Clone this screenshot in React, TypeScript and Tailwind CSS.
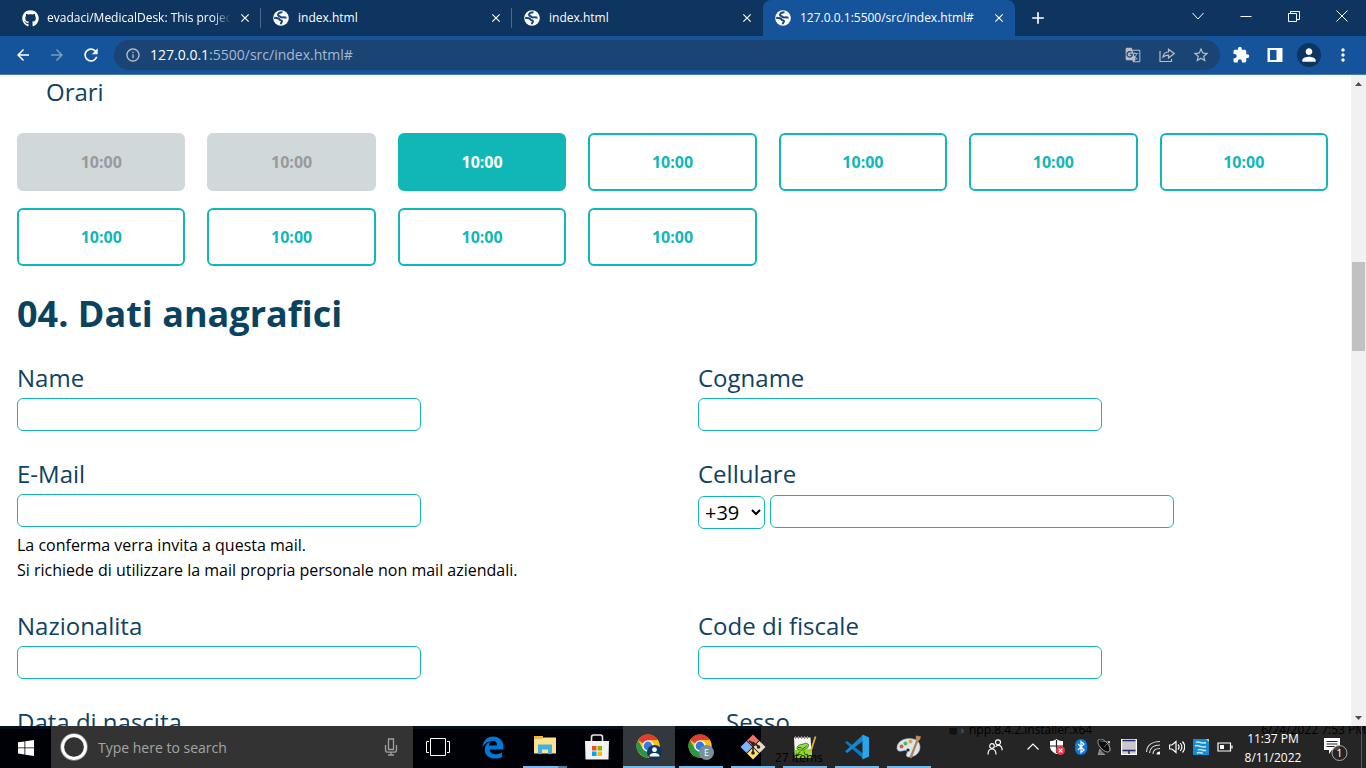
import type { ReactNode } from "react";
import { FaGithub } from "react-icons/fa";
import {
  MdArrowBack,
  MdArrowForward,
  MdRefresh,
  MdInfoOutline,
  MdStarOutline,
  MdExtension,
  MdMoreVert,
  MdPerson,
  MdClose,
  MdAdd,
  MdGTranslate,
} from "react-icons/md";

const slots = ["off", "off", "on", "free", "free", "free", "free", "free", "free", "free", "free"];

const slotStyles: Record<string, string> = {
  off: "border-[#d0d8da] bg-[#d0d8da] text-[#989a9d]",
  on: "border-[#11b7b7] bg-[#11b7b7] text-white",
  free: "border-[#11b7b7] bg-white text-[#11b7b7]",
};

function Globe() {
  return (
    <svg viewBox="0 0 16 16" className="size-4 shrink-0">
      <circle cx="8" cy="8" r="7.8" fill="#fff" />
      <path
        d="M9.500 2.300C7 2.200 5 3.200 5 4.800c0 1.500 1.800 1.300 2.700 2.200.800.800 2.200.300 3 .300 1.200 0 1.700.600 2.800.200"
        fill="none"
        stroke="#1a4777"
        strokeWidth="2"
      />
      <path
        d="M1.200 7.800c2 .400 3.300-.200 4.600.800.900.700.700 1.500 1.900 1.700 1.300.200 1.600.800 1 1.700-.600.800-.900 1-.900 2.300"
        fill="none"
        stroke="#1a4777"
        strokeWidth="2"
      />
    </svg>
  );
}

function Tab({ title, github, active, divider }: { title: string; github?: boolean; active?: boolean; divider?: boolean }) {
  return (
    <div
      className={
        active
          ? "relative flex h-9 w-[252px] items-center rounded-t-lg bg-[#15539b] pr-2 pl-3"
          : "relative flex h-9 w-[251px] items-center pr-2 pl-3"
      }
    >
      {github ? <FaGithub className="size-[17px] shrink-0 text-white" /> : <Globe />}
      <a
        href="#"
        className={
          github
            ? "ml-2 flex-1 overflow-hidden text-[12px] whitespace-nowrap text-white [mask-image:linear-gradient(to_right,black_90%,transparent)]"
            : "ml-[9px] flex-1 overflow-hidden text-[12px] whitespace-nowrap text-white"
        }
      >
        {title}
      </a>
      <button aria-label={"Close " + title} className="ml-1.5 flex size-4 items-center justify-center text-white">
        <MdClose className="size-[14px]" />
      </button>
      {divider && <span className="absolute top-2 right-0 h-5 w-px bg-[#4b6a8d]" />}
    </div>
  );
}

function ToolButton({ label, children }: { label: string; children: ReactNode }) {
  return (
    <button aria-label={label} className="flex h-[30px] w-[34px] shrink-0 items-center justify-center text-white">
      {children}
    </button>
  );
}

function WindowButton({ label, d }: { label: string; d: string }) {
  return (
    <button aria-label={label} className="flex h-[31px] w-12 items-center justify-center">
      <svg viewBox="0 0 12 12" className="size-3" fill="none" stroke="#fff">
        <path d={d} />
      </svg>
    </button>
  );
}

function Browser() {
  return (
    <header className="shrink-0 border-b border-[#4679b4] bg-[#15539b]">
      <div className="flex h-9 bg-[#0d355f] pl-2.5">
        <Tab title="evadaci/MedicalDesk: This project is" github divider />
        <Tab title="index.html" divider />
        <Tab title="index.html" />
        <Tab title="127.0.0.1:5500/src/index.html#" active />
        <button aria-label="New tab" className="ml-[11px] flex w-6 items-center justify-center text-white">
          <MdAdd className="size-5" />
        </button>
        <div className="ml-auto flex">
          <WindowButton label="Search tabs" d="M.5 3l5.500 6 5.500-6" />
          <WindowButton label="Minimize" d="M.5 6.500h11" />
          <WindowButton label="Restore" d="M.5 3.500h8v8h-8zM2.500 3.500v-2h9v8h-3" />
          <WindowButton label="Close" d="M.5.500l11 11M11.500.500l-11 11" />
        </div>
      </div>
      <div className="flex h-[38px] items-center px-1.5">
        <ToolButton label="Back"><MdArrowBack className="size-[18px]" /></ToolButton>
        <ToolButton label="Forward"><MdArrowForward className="size-[18px] text-[#7a9cc5]" /></ToolButton>
        <ToolButton label="Reload"><MdRefresh className="size-5" /></ToolButton>
        <div className="mr-1 ml-1.5 flex h-[30px] flex-1 items-center rounded-full bg-[#194474] pr-0.5 pl-[11px] text-[#b9bec5]">
          <MdInfoOutline className="size-4" />
          <label className="ml-[9px] flex-1 text-[14px] leading-5 text-[#a9b9cc]">
            <span className="text-white">127.0.0.1</span>:5500/src/index.html#
          </label>
          <ToolButton label="Translate"><MdGTranslate className="size-4 text-[#b9bec5]" /></ToolButton>
          <ToolButton label="Share">
            <svg viewBox="0 0 16 16" className="size-4" fill="none" stroke="#b9bec5" strokeWidth="1.200">
              <path d="M1 4v10.500h11.500V12M4 10c.500-3.500 2.500-5 5.500-5V2.200L15.200 6.500 9.500 11V8.200c-2.500 0-4 .600-5.500 1.800z" />
            </svg>
          </ToolButton>
          <ToolButton label="Bookmark"><MdStarOutline className="size-[18px] text-[#b9bec5]" /></ToolButton>
        </div>
        <ToolButton label="Extensions"><MdExtension className="size-[18px]" /></ToolButton>
        <ToolButton label="Side panel">
          <svg viewBox="0 0 16 16" className="size-4">
            <path fill="#fff" fillRule="evenodd" d="M.5 1h15v14H.5zM3 3v10h6.500V3z" />
          </svg>
        </ToolButton>
        <ToolButton label="Profile">
          <span className="flex size-6 items-center justify-center rounded-full bg-[#0d355f]">
            <MdPerson className="size-5" />
          </span>
        </ToolButton>
        <ToolButton label="Menu"><MdMoreVert className="size-5" /></ToolButton>
      </div>
    </header>
  );
}

const labelStyle = "mb-1 block text-[24px] leading-[33px] text-[#0f4260]";
const inputStyle = "h-[33px] w-[404px] rounded-md border border-[#11b7b7] bg-white px-2 text-[20px]";

function Field({ id, label, type = "text", children }: { id: string; label: string; type?: string; children?: ReactNode }) {
  return (
    <div>
      <label htmlFor={id} className={labelStyle}>{label}</label>
      <input id={id} type={type} className={inputStyle} />
      {children}
    </div>
  );
}

function BookingForm() {
  return (
    <main className="min-w-0 flex-1 overflow-hidden pr-[23px] pl-[17px]">
      <h2 className="pl-[29px] text-[24px] leading-[34px] text-[#0f4260]">Orari</h2>
      <div className="mt-6 grid grid-cols-7 gap-x-[22px] gap-y-[17px]">
        {slots.map((kind, i) => (
          <button
            key={i}
            disabled={kind === "off"}
            className={"h-[58px] rounded-md border-2 text-[16px] font-bold " + slotStyles[kind]}
          >
            10:00
          </button>
        ))}
      </div>
      <h1 className="mt-5 text-[36px] leading-[56px] font-bold text-[#0b435f]">04. Dati anagrafici</h1>
      <form className="mt-[19px] grid grid-cols-2 gap-x-[51px] gap-y-[26px]">
        <Field id="name" label="Name" />
        <Field id="surname" label="Cogname" />
        <Field id="email" label="E-Mail" type="email">
          <p className="mt-1.5 text-[16px] leading-[25px] text-black">
            La conferma verra invita a questa mail.
            <br />
            Si richiede di utilizzare la mail propria personale non mail aziendali.
          </p>
        </Field>
        <div>
          <label htmlFor="phone" className={labelStyle}>Cellulare</label>
          <div className="flex items-center gap-[5px]">
            <select aria-label="Prefisso" className="mt-0.5 h-[33px] w-[67px] rounded-md border border-[#11b7b7] bg-white pl-0.5 text-[20px] text-black">
              <option>+39</option>
            </select>
            <input id="phone" type="tel" className={inputStyle} />
          </div>
        </div>
        <Field id="nation" label="Nazionalita" />
        <Field id="fiscal" label="Code di fiscale" />
        <Field id="birth" label="Data di nascita" />
        <div className="pl-7">
          <Field id="sex" label="Sesso" />
        </div>
      </form>
    </main>
  );
}

function ScrollBar() {
  return (
    <div className="flex w-[15px] shrink-0 flex-col items-center bg-[#f1f1f1]">
      <svg viewBox="0 0 15 17" className="h-[17px] w-[15px]"><path d="M4 11l3.500-4 3.500 4z" fill="#505050" /></svg>
      <div className="mt-[170px] h-[89px] w-[13px] bg-[#c1c1c1]" />
      <svg viewBox="0 0 15 17" className="mt-auto h-[17px] w-[15px]"><path d="M4 7l3.500 4L11 7z" fill="#505050" /></svg>
    </div>
  );
}

function ChromeLogo({ children }: { children: ReactNode }) {
  return (
    <svg viewBox="0 0 26 26" className="size-[26px]">
      <circle cx="12" cy="12" r="11.500" fill="#fbc116" />
      <path d="M12 12L2 6.300A11.500 11.500 0 0 1 22 6.300H12z" fill="#e33b2e" />
      <path d="M2 6.300A11.500 11.500 0 0 0 12 23.500l5-8.600L12 12 7 14.900z" fill="#279847" />
      <path d="M12 6.300h10A11.500 11.500 0 0 1 12 23.500l5-8.600z" fill="#fbc116" />
      <circle cx="12" cy="12" r="5.700" fill="#fff" />
      <circle cx="12" cy="12" r="4.400" fill="#3478e5" />
      {children}
    </svg>
  );
}

function TaskButton({ label, state, children }: { label: string; state?: "open" | "active" | "stacked"; children: ReactNode }) {
  return (
    <button
      aria-label={label}
      className={
        state === "active"
          ? "relative flex w-[52px] shrink-0 items-center justify-center bg-[#33383d]"
          : "relative flex w-[52px] shrink-0 items-center justify-center"
      }
    >
      {children}
      {state === "open" && <span className="absolute inset-x-1 bottom-0 h-0.5 bg-[#76b9ed]" />}
      {state === "active" && <span className="absolute inset-x-0 bottom-0 h-0.5 bg-[#76b9ed]" />}
      {state === "stacked" && <span className="absolute inset-x-1 bottom-0 h-0.5 border-r-[9px] border-[#527fa5] bg-[#76b9ed]" />}
    </button>
  );
}

function TrayIcon({ label, children }: { label: string; children: ReactNode }) {
  return (
    <button aria-label={label} className="flex w-6 shrink-0 items-center justify-center">
      <svg viewBox="0 0 16 16" className="size-4" fill="none" stroke="#fff" strokeWidth="1.200">
        {children}
      </svg>
    </button>
  );
}

function Taskbar() {
  return (
    <footer className="relative flex h-[42px] shrink-0 bg-[#252525] text-white">
      <div className="flex bg-[#000106]">
        <button aria-label="Start" className="flex w-[51px] items-center justify-center border-t-[3px] border-[#02101c] pb-0.5">
          <svg viewBox="0 0 16 16" className="size-4" fill="#fff">
            <path d="M0 2.300L6.500 1.400v6.100H0zM7.300 1.300L16 0v7.500H7.300zM0 8.300h6.500v6.200L0 13.600zM7.300 8.300H16V16l-8.700-1.300z" />
          </svg>
        </button>
        <div className="flex w-[362px] items-center bg-[#333333] pr-[15px] pl-[9px]">
          <svg viewBox="0 0 28 28" className="size-7"><circle cx="14" cy="14" r="11.700" fill="none" stroke="#999" strokeWidth="4" /><circle cx="14" cy="14" r="11.500" fill="none" stroke="#fff" strokeWidth="2.800" /></svg>
          <input
            aria-label="Type here to search"
            placeholder="Type here to search"
            className="ml-2.5 min-w-0 flex-1 text-[14px] placeholder:text-[#a5a5a5]"
          />
          <svg viewBox="0 0 14 18" className="h-[18px] w-3.5" fill="none" stroke="#a0a0a0" strokeWidth="1.300">
            <path d="M4.500 1h5v10.500h-5zM1.500 7v5c0 1.500 1 2.200 2.500 2.200h6c1.500 0 2.500-.700 2.500-2.200V7M7 14.500V17M4 17h6" />
          </svg>
        </div>
      </div>
      <div className="flex w-[348px] bg-linear-to-b from-[#02101c] from-[3px] to-[#000106] to-[3px] pl-0.5">
        <TaskButton label="Task View">
          <svg viewBox="0 0 24 20" className="mr-1.5 h-5 w-6" fill="none" stroke="#fff">
            <path d="M4.500 1.500h15v17h-15zM3 4.500H.500v11H3M21 4.500h2.500v11H21" />
          </svg>
        </TaskButton>
        <TaskButton label="Edge">
          <svg viewBox="0 0 22 23" className="h-[23px] w-[22px]">
            <path fill="#0078d7" d="M.5 10.500C1 5 5 .500 11 .500c6.500 0 10.500 4.500 10.500 10.500v2.500H7.500c.200 3 2.500 4.700 6 4.700 2.500 0 4.700-.600 6.600-1.800v4.700c-2 1-4.400 1.500-7.100 1.500-6 0-10.200-3.400-10.200-8.900 0-4 2-6.700 5.700-8.200-1 1.300-1.300 2.600-1.400 4h8c0-3.200-1.500-4.800-4.500-4.800-4 0-7.500 2.200-10.100 6.300z" />
          </svg>
        </TaskButton>
        <TaskButton label="File Explorer" state="stacked">
          <svg viewBox="0 0 24 20" className="-mt-1 h-5 w-6">
            <path fill="#e8b64a" d="M1 2.500V1h9v2h13v4H1z" />
            <path fill="#ffe28d" d="M1 4h8l1.500-1.500H23v16H1z" />
            <path fill="#3fb1e5" d="M5 9.500h14V19h-4v-4.500H9V19H5z" />
          </svg>
        </TaskButton>
        <TaskButton label="Store">
          <svg viewBox="0 0 24 26" className="h-[26px] w-6">
            <path d="M6.500 9V3.500c0-1.500.800-2.500 2-2.500h7c1.200 0 2 1 2 2.500V9" fill="none" stroke="#e8e8e8" strokeWidth="1.600" />
            <path fill="#f3f3f3" d="M0 7h24l-.500 18.500H.500z" />
            <path fill="#f25022" d="M7 12h4.500v4.500H7z" /><path fill="#7fba00" d="M12.500 12H17v4.500h-4.500z" />
            <path fill="#00a4ef" d="M7 17.500h4.500V22H7z" /><path fill="#ffb900" d="M12.500 17.500H17V22h-4.500z" />
          </svg>
        </TaskButton>
        <TaskButton label="Chrome" state="active">
          <ChromeLogo>
            <circle cx="18.500" cy="18.500" r="7.500" fill="#0d355f" />
            <circle cx="18.500" cy="15.700" r="2.400" fill="#fff" />
            <path d="M13.500 22.500c0-2.500 2.500-3.400 5-3.400s5 .900 5 3.400z" fill="#fff" />
          </ChromeLogo>
        </TaskButton>
        <TaskButton label="Chrome, profile E" state="open">
          <ChromeLogo>
            <circle cx="18.500" cy="18.500" r="7.500" fill="#78909c" />
            <text x="18.500" y="21.700" textAnchor="middle" fontSize="9" fill="#fff">E</text>
          </ChromeLogo>
        </TaskButton>
      </div>
      <div className="-ml-[34px] flex">
        <TaskButton label="Git" state="open">
          <svg viewBox="0 0 26 26" className="size-[26px]">
            <path fill="#f0706c" d="M13 .500L19 6.500 13 12.500 7 6.500z" /><path fill="#80b3ff" d="M6.500 7l6 6-6 6-6-6z" />
            <path fill="#ffe06a" d="M13 13.500l6 6-6 6-6-6z" /><path fill="#e7dec3" d="M19.500 7l6 6-6 6-6-6z" />
            <path d="M9 7l9.500 5M13 10v9" stroke="#33241f" strokeWidth="1.600" />
            <circle cx="13" cy="9.500" r="1.800" fill="#33241f" /><circle cx="18.500" cy="13" r="1.800" fill="#33241f" /><circle cx="13" cy="19" r="1.800" fill="#33241f" />
          </svg>
        </TaskButton>
        <TaskButton label="Notepad++" state="open">
          <svg viewBox="0 0 24 24" className="size-6">
            <path fill="#f6f6f0" d="M1 2.500h16.500L19 22.500H2z" />
            <path d="M2.500 1v3M5.500 1v3M8.500 1v3M11.500 1v3M14.500 1v3" stroke="#8a8a8a" />
            <path fill="#8fd61f" d="M1.600 15l16.800-1 .600 8.500H2z" />
            <path fill="#93e04a" stroke="#37631c" strokeWidth=".800" d="M4 14c0-3.500 2.500-4.500 5-4.500l4-1.500 2.500 1.500-.500 3-4 2.500H7z" />
            <path d="M5 12.500h3l1.500 1.500 4-3M7 16.500L4.500 19.500h4M11 16.500l1 3h3" fill="none" stroke="#2c5518" strokeWidth=".900" />
            <path d="M22.500 1.500L17.500 17" stroke="#e5ad3c" strokeWidth="1.800" /><path d="M17.700 16.500L16.500 21" stroke="#c9bda6" />
          </svg>
        </TaskButton>
        <TaskButton label="Visual Studio Code" state="open">
          <svg viewBox="0 0 26 26" className="size-[26px]">
            <path fill="#0879c2" d="M1 8.500L3 7l16 12.500v5z" />
            <path fill="#1389d6" d="M1 17.500L3 19 19 7V.800z" />
            <path fill="#2aa5ed" d="M18.500.500L25 3.500v19l-6.500 3z" />
          </svg>
        </TaskButton>
        <TaskButton label="Paint" state="open">
          <svg viewBox="0 0 26 26" className="size-[26px]">
            <path fill="#d8e7f2" stroke="#9cb6cd" strokeWidth=".600" d="M1 14C1 8 7 4.500 13.500 4.500S24 8 24 13c0 6-5 10-11 10-3 0-3-2-2-4s-1-3-3-2.500-7 2-7-2.500z" />
            <circle cx="5.500" cy="12.500" r="2" fill="#e8553e" /><circle cx="9.500" cy="9.500" r="2" fill="#58b947" />
            <circle cx="14.500" cy="7.500" r="2" fill="#f19b38" /><circle cx="12" cy="16" r="1.600" fill="#222" />
            <path d="M14.500 24L21.500 6" stroke="#bf7c43" strokeWidth="2.200" /><path d="M19.500 6l.500-4.500 5 1-1 3-2 2z" fill="#b98a5c" />
          </svg>
        </TaskButton>
      </div>
      <div className="pointer-events-none absolute inset-0 overflow-hidden text-[12px] leading-4 text-black">
        <span className="absolute top-6 left-[775px]">27 items</span>
        <span className="absolute -top-1 left-[969px]">npp.8.4.2.installer.x64</span>
        <span className="absolute -top-1 right-0">6/24/2022 7:53 PM</span>
        <svg viewBox="0 0 16 12" className="absolute top-0 left-[949px] h-3 w-4">
          <path d="M0 2h8l2 4-4 3-5-1z" fill="#111" /><path d="M8 3l4-1 3 2v3l-3 3-4-3z" fill="#172e40" /><path d="M12 2l3 2v3h-3z" fill="#51451a" />
        </svg>
      </div>
      <div className="relative ml-auto flex">
        <div className="mr-3.5 flex">
          <TrayIcon label="People">
            <circle cx="5" cy="7" r="2.300" /><path d="M1 15.500c0-3.500 1.500-5.500 4-5.500s4 2 4 5.500" />
            <circle cx="11" cy="3.300" r="2.500" /><path d="M8.500 8c1-1.500 1.500-1.700 2.700-1.700 2.500 0 4 2 4 5" />
          </TrayIcon>
        </div>
        <TrayIcon label="Show hidden icons"><path d="M2.500 10.500L8 5l5.500 5.500" /></TrayIcon>
        <TrayIcon label="Security">
          <path fill="#fff" stroke="none" d="M1 2c3 0 4.500-.500 6.500-2C9.500 1.500 11 2 14 2v5c0 4-3 6.500-6.500 8C4 13.500 1 11 1 7z" />
          <path d="M7.500 1v13M1 7h13" stroke="#222" /><circle cx="11.500" cy="11.500" r="4.500" fill="#e1394a" stroke="none" /><path d="M9.700 9.700l3.600 3.600M13.300 9.700l-3.600 3.600" />
        </TrayIcon>
        <TrayIcon label="Bluetooth">
          <rect x="2" y="0" width="12" height="16" rx="6" fill="#0a7ae0" stroke="none" /><path d="M5 5l6 6-3 2.500v-11L11 5l-6 6" />
        </TrayIcon>
        <TrayIcon label="Satellite">
          <path d="M3 10L1.500 15.500H8" fill="#777" stroke="#999" />
          <ellipse cx="7" cy="6.500" rx="8" ry="4" transform="rotate(48 7 6.500)" fill="#0c0c0c" stroke="#b5b5b5" strokeWidth=".800" />
          <path d="M7 8l5-5M3 2l9 1 1 9" stroke="#8a8a8a" strokeWidth=".700" />
          <circle cx="12" cy="3" r="1" fill="#ddd" stroke="none" />
        </TrayIcon>
        <TrayIcon label="Touchpad">
          <path fill="#c8c8c8" stroke="#fff" d="M.600.600h14.800v14.800H.600z" /><path d="M1.500 11.500h13M8 11.500v3.500M1.500 1.500h13" stroke="#25256e" strokeWidth="1.500" />
        </TrayIcon>
        <TrayIcon label="Wi-Fi">
          <path d="M1.500 13C2 6.500 7 2.500 15 2.500M4.500 14C5 9 9 6 15 6M8 15c0-3.500 3-5.500 7-5.500" stroke="#d5d5d5" /><path d="M11.500 15.500c0-2 1.500-3 3.500-3v3z" fill="#fff" stroke="none" />
        </TrayIcon>
        <TrayIcon label="Volume">
          <path d="M.500 6h2.500l4-3.500v11L3 10H.500zM9 5.500c1.300 1.500 1.300 3.500 0 5M11.300 4c2 2.500 2 5.500 0 8M13.500 2.500c2.700 3.300 2.700 7.700 0 11" />
        </TrayIcon>
        <TrayIcon label="Graphics">
          <path d="M0 0h16v16H0z" fill="#148bd2" stroke="none" /><path d="M3 3.500c3-2 6 2 10 0M2 7c4-2 6 2.500 11 .500M5 11c3-2 5 2 8 0M4 14c2-1.500 4 .500 6 0" stroke="#bde6f7" strokeWidth="1.600" /><path d="M13 0h3v3z" fill="#f3d14f" stroke="none" />
        </TrayIcon>
        <TrayIcon label="Battery">
          <path d="M1 4h12.500v8H1zM15 6.500v3" /><path d="M3 6h4v4H3z" fill="#fff" stroke="none" />
        </TrayIcon>
        <time className="flex w-[72px] flex-col items-center justify-center pt-px text-[12px] leading-[19px]">
          <span>11:37 PM</span>
          <span>8/11/2022</span>
        </time>
        <button aria-label="Notifications" className="flex w-[52px] items-center justify-center pt-1">
          <svg viewBox="0 0 26 26" className="size-[26px]">
            <path d="M2 2h16v12H10l-3 4v-4H2z" fill="#fff" /><path d="M4.500 5.500h11M4.500 8h11M4.500 10.500h8" stroke="#252525" />
            <circle cx="17.500" cy="17" r="7.500" fill="#252525" fillOpacity=".85" stroke="#aaa" /><text x="17.500" y="21" textAnchor="middle" fontSize="11" fill="#fff">1</text>
          </svg>
        </button>
        <button aria-label="Show desktop" className="w-[5px] border-l border-[#5a5a5a]" />
      </div>
    </footer>
  );
}

export default function App() {
  return (
    <div className="flex h-screen flex-col overflow-hidden bg-white font-['Open_Sans','Noto_Sans',sans-serif]">
      <Browser />
      <div className="flex min-h-0 flex-1">
        <BookingForm />
        <ScrollBar />
      </div>
      <Taskbar />
    </div>
  );
}
